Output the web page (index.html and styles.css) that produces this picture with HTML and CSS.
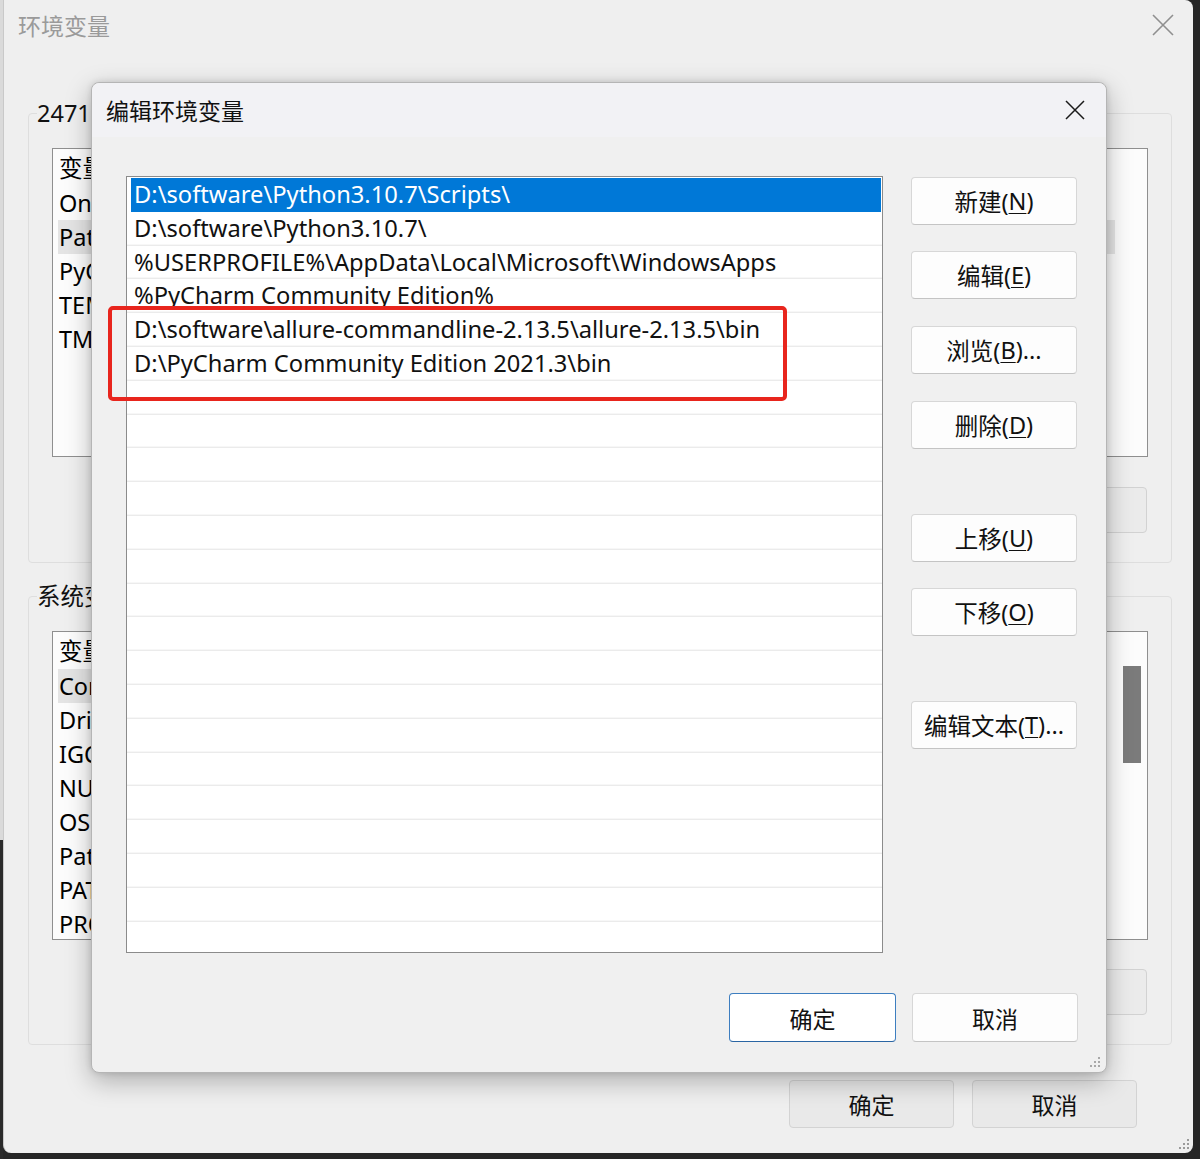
FILE: index.html
```html
<!DOCTYPE html>
<html lang="zh-CN">
<head>
<meta charset="utf-8">
<title>编辑环境变量</title>
<link rel="stylesheet" href="styles.css">
</head>
<body>
<div class="desktop">
  <div class="bgwin">
    <div class="bg-title">
      <span class="bg-title-text">环境变量</span>
      <svg class="bg-close" width="22" height="22" viewBox="0 0 22 22"><path d="M1 1 L21 21 M21 1 L1 21" stroke="#8f8f8f" stroke-width="1.6" fill="none"/></svg>
    </div>
    <fieldset class="group group-user">
      <legend class="group-label">2471</legend>
      <div class="bg-list">
        <div class="bg-list-main">
          <div class="bg-head"><span class="bg-cell">变量</span></div>
          <div class="bg-row"><span class="bg-cell">On</span></div>
          <div class="bg-row hl"><span class="bg-cell">Pat</span></div>
          <div class="bg-row"><span class="bg-cell">PyC</span></div>
          <div class="bg-row"><span class="bg-cell">TEM</span></div>
          <div class="bg-row"><span class="bg-cell">TMP</span></div>
        </div>
      </div>
      <div class="bg-btns">
        <div class="bg-btn"></div>
      </div>
    </fieldset>
    <fieldset class="group group-sys">
      <legend class="group-label">系统变</legend>
      <div class="bg-list">
        <div class="bg-list-main">
          <div class="bg-head"><span class="bg-cell">变量</span></div>
          <div class="bg-row hl"><span class="bg-cell">Com</span></div>
          <div class="bg-row"><span class="bg-cell">Dri</span></div>
          <div class="bg-row"><span class="bg-cell">IGC</span></div>
          <div class="bg-row"><span class="bg-cell">NUM</span></div>
          <div class="bg-row"><span class="bg-cell">OS</span></div>
          <div class="bg-row"><span class="bg-cell">Pat</span></div>
          <div class="bg-row"><span class="bg-cell">PAT</span></div>
          <div class="bg-row"><span class="bg-cell">PRO</span></div>
        </div>
        <div class="bg-scroll"><div class="bg-thumb"></div></div>
      </div>
      <div class="bg-btns">
        <div class="bg-btn"></div>
      </div>
    </fieldset>
    <div class="bg-footer">
      <div class="bg-fbtn">确定</div>
      <div class="bg-fbtn">取消</div>
    </div>
    <svg class="grip bg-grip" width="14" height="14" viewBox="0 0 14 14"><g fill="#9a9a9a"><rect x="10" y="2" width="2" height="2"/><rect x="6" y="6" width="2" height="2"/><rect x="10" y="6" width="2" height="2"/><rect x="2" y="10" width="2" height="2"/><rect x="6" y="10" width="2" height="2"/><rect x="10" y="10" width="2" height="2"/></g></svg>
  </div>

  <div class="dialog">
    <div class="dlg-title">
      <span class="dlg-title-text">编辑环境变量</span>
      <svg class="dlg-close" width="20" height="20" viewBox="0 0 20 20"><path d="M1 1 L19 19 M19 1 L1 19" stroke="#1a1a1a" stroke-width="1.5" fill="none"/></svg>
    </div>
    <div class="dlg-body">
      <div class="path-list">
        <div class="prow sel">D:\software\Python3.10.7\Scripts\</div>
        <div class="prow">D:\software\Python3.10.7\</div>
        <div class="prow">%USERPROFILE%\AppData\Local\Microsoft\WindowsApps</div>
        <div class="prow">%PyCharm Community Edition%</div>
        <div class="prow">D:\software\allure-commandline-2.13.5\allure-2.13.5\bin</div>
        <div class="prow">D:\PyCharm Community Edition 2021.3\bin</div>
        <div class="prow"></div><div class="prow"></div><div class="prow"></div><div class="prow"></div>
        <div class="prow"></div><div class="prow"></div><div class="prow"></div><div class="prow"></div>
        <div class="prow"></div><div class="prow"></div><div class="prow"></div><div class="prow"></div>
        <div class="prow"></div><div class="prow"></div><div class="prow"></div><div class="prow"></div>
        <div class="prow"></div>
      </div>
      <div class="side-btns">
        <div class="btn b-new">新建(<u>N</u>)</div>
        <div class="btn b-edit">编辑(<u>E</u>)</div>
        <div class="btn b-browse">浏览(<u>B</u>)...</div>
        <div class="btn b-del">删除(<u>D</u>)</div>
        <div class="btn b-up">上移(<u>U</u>)</div>
        <div class="btn b-down">下移(<u>O</u>)</div>
        <div class="btn b-text">编辑文本(<u>T</u>)...</div>
      </div>
    </div>
    <div class="dlg-footer">
      <div class="btn fbtn default">确定</div>
      <div class="btn fbtn">取消</div>
    </div>
    <div class="redbox"></div>
    <svg class="grip dlg-grip" width="14" height="14" viewBox="0 0 14 14"><g fill="#a8a8a8"><rect x="10" y="2" width="2" height="2"/><rect x="6" y="6" width="2" height="2"/><rect x="10" y="6" width="2" height="2"/><rect x="2" y="10" width="2" height="2"/><rect x="6" y="10" width="2" height="2"/><rect x="10" y="10" width="2" height="2"/></g></svg>
  </div>
</div>
</body>
</html>
```

FILE: styles.css
```css
* { box-sizing: border-box; }
html, body { margin: 0; padding: 0; }
body {
  width: 1200px;
  height: 1159px;
  overflow: hidden;
  font-family: "Noto Sans", "Noto Sans CJK SC", sans-serif;
  color: #000;
}
.desktop {
  position: relative;
  width: 1200px;
  height: 1159px;
  background:
    linear-gradient(#dadada 0 840px, #2a2a2a 840px) left top / 3px 100% no-repeat,
    #262626;
  padding-left: 3px;
}

/* background window */
.bgwin {
  position: relative;
  width: 1190px;
  height: 1153px;
  background: #efefef;
  border-radius: 0 8px 8px 8px;
  border-left: 1px solid #c9c9c9;
  overflow: hidden;
}
.bg-title {
  height: 50px;
  display: flex;
  align-items: center;
  justify-content: space-between;
  padding: 0 19px 0 14px;
}
.bg-title-text {
  font-size: 23px;
  color: #9a9a9a;
  font-family: "Noto Sans CJK SC", sans-serif;
}
.group {
  margin: 48px 21px 0 24px;
  border: 1px solid #dedede;
  border-radius: 4px;
  padding: 20px 23px 29px;
  min-width: 0;
}
.group-sys { margin-top: 18px; }
.group-label {
  font-size: 23.5px;
  line-height: 30px;
  padding: 0;
  margin-left: -15px;
  white-space: nowrap;
  font-family: "Noto Sans", "Noto Sans CJK SC", sans-serif;
  color: #111;
}
.bg-list {
  height: 309px;
  border: 1px solid #8f8f8f;
  background: #fcfcfc;
  display: flex;
}
.bg-list-main {
  flex: 1;
  padding-left: 5px;
}
.bg-head, .bg-row {
  font-size: 23.5px;
  white-space: nowrap;
  margin-right: 32px;
}
.bg-cell {
  display: block;
  padding-left: 1px;
}
.bg-head { height: 37px; line-height: 37px; font-family: "Noto Sans CJK SC", sans-serif; }
.bg-row { height: 34px; line-height: 34px; }
.bg-row.hl { background: #e4e4e4; }
.bg-scroll {
  width: 28px;
  padding: 34px 6px 0 4px;
}
.bg-thumb {
  height: 97px;
  background: #7b7b7b;
}
.bg-btns {
  display: flex;
  justify-content: flex-end;
  gap: 16px;
  margin-top: 30px;
  padding-right: 1px;
}
.group-sys .bg-btns { margin-top: 29px; }
.bg-btn {
  width: 165px;
  height: 46px;
  border: 1px solid #d2d2d2;
  border-radius: 4px;
  background: #ebebeb;
}
.bg-footer {
  display: flex;
  justify-content: flex-end;
  gap: 18px;
  margin-top: 35px;
  padding-right: 56px;
}
.bg-fbtn {
  width: 165px;
  height: 48px;
  border: 1px solid #d3d3d3;
  border-radius: 4px;
  background: #e9e9e9;
  display: flex;
  align-items: center;
  justify-content: center;
  font-size: 23px;
  font-family: "Noto Sans CJK SC", sans-serif;
  color: #111;
}
.grip { position: absolute; }
.bg-grip { right: 2px; bottom: 2px; }

/* dialog */
.dialog {
  position: absolute;
  left: 91px;
  top: 82px;
  width: 1016px;
  height: 991px;
  background: #f0f0f0;
  border: 1px solid #b5b5b5;
  border-radius: 8px;
  box-shadow: 0 8px 26px rgba(0, 0, 0, 0.28), 0 0 6px rgba(0, 0, 0, 0.12);
}
.dlg-title {
  height: 54px;
  display: flex;
  align-items: center;
  justify-content: space-between;
  padding: 0 21px 0 14px;
  background: #f2f2f5;
  border-radius: 8px 8px 0 0;
}
.dlg-title-text {
  font-size: 23px;
  font-family: "Noto Sans CJK SC", sans-serif;
  color: #111;
}
.dlg-body {
  display: flex;
  align-items: flex-start;
  margin-top: 39px;
  padding-left: 34px;
}
.path-list {
  width: 757px;
  height: 777px;
  border: 1px solid #8b8b8b;
  background: #fff;
  padding-top: 1px;
  overflow: hidden;
}
.prow {
  height: 33.8px;
  line-height: 32px;
  padding-left: 7px;
  font-size: 23.7px;
  white-space: nowrap;
  background: linear-gradient(to top, #ebebeb 0 1px, #f7f7f7 1px 2px, #fff 2px);
  color: #111;
}
.prow.sel {
  margin-left: 4px;
  margin-right: 1px;
  padding-left: 3px;
  background: #0078d7;
  color: #fff;
}
.side-btns {
  display: flex;
  flex-direction: column;
  margin-left: 28px;
  padding-top: 1px;
}
.btn {
  width: 166px;
  height: 48px;
  background: #fdfdfd;
  border: 1px solid #d7d7d7;
  border-bottom-color: #c4c4c4;
  border-radius: 4px;
  display: flex;
  align-items: center;
  justify-content: center;
  font-size: 23.5px;
  color: #111;
  white-space: nowrap;
}
.btn u { text-underline-offset: 3px; text-decoration-thickness: 1px; }
.b-edit { margin-top: 26px; }
.b-browse { margin-top: 27px; }
.b-del { margin-top: 27px; }
.b-up { margin-top: 65px; }
.b-down { margin-top: 26px; }
.b-text { margin-top: 65px; }
.dlg-footer {
  display: flex;
  justify-content: flex-end;
  gap: 16px;
  margin-top: 40px;
  padding-right: 28px;
}
.fbtn {
  height: 49px;
  font-size: 23px;
  font-family: "Noto Sans CJK SC", sans-serif;
}
.fbtn.default {
  width: 167px;
  border: 1px solid #3d7ec0;
  border-bottom-color: #2a65a3;
  background: #fff;
}
.redbox {
  position: absolute;
  left: 16px;
  top: 223px;
  width: 679px;
  height: 95px;
  border: 4px solid #e8251d;
  border-radius: 5px;
}
.dlg-grip { right: 4px; bottom: 3px; }
```
